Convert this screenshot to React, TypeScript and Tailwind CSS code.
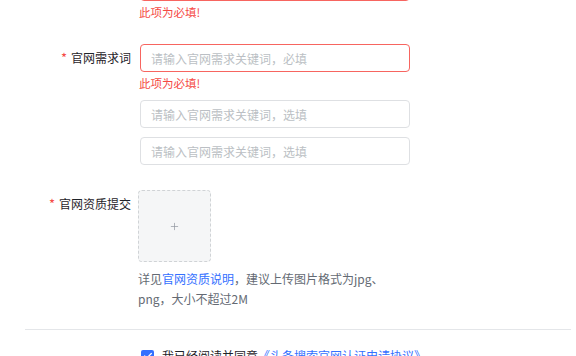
import { Check, Plus } from 'lucide-react';

const FONT = { fontFamily: '"Noto Sans CJK SC", "Noto Sans", sans-serif' };

function Label({ text, required }: { text: string; required?: boolean }) {
  return (
    <div className="w-[140px] shrink-0 pr-[9px] text-right text-[12px] leading-[28px] text-[#1f2329]">
      {required && <span className="mr-[4px] text-[13px] text-[#f54a45]">*</span>}
      {text}
    </div>
  );
}

function Input({ placeholder, error }: { placeholder: string; error?: boolean }) {
  return (
    <input
      placeholder={placeholder}
      className={
        'h-[28px] w-[270px] rounded-[4px] border bg-white px-[10px] text-[12px] text-[#1f2329] outline-none placeholder:text-[#bbbfc4] ' +
        (error ? 'border-[#f76560]' : 'border-[#dee0e3]')
      }
    />
  );
}

function ErrorText() {
  return <div className="ml-[-1px] pt-[3px] text-[11.5px] leading-[16px] text-[#f54a45]">此项为必填!</div>;
}

export default function App() {
  return (
    <div className="h-[356px] w-[576px] overflow-hidden bg-white" style={FONT}>
      {/* previous field, scrolled mostly out of view */}
      <div className="mt-[-27px] flex">
        <div className="w-[140px] shrink-0" />
        <div>
          <Input placeholder="" error />
          <ErrorText />
        </div>
      </div>

      <div className="mt-[24px] flex">
        <Label text="官网需求词" required />
        <div>
          <Input placeholder="请输入官网需求关键词，必填" error />
          <ErrorText />
          <div className="mt-[9px]">
            <Input placeholder="请输入官网需求关键词，选填" />
          </div>
          <div className="mt-[9px]">
            <Input placeholder="请输入官网需求关键词，选填" />
          </div>
        </div>
      </div>

      <div className="mt-[25px] flex">
        <Label text="官网资质提交" required />
        <div className="ml-[-2px] w-[270px]">
          <div className="flex h-[72px] w-[73px] items-center justify-center rounded-[4px] border border-dashed border-[#d0d3d6] bg-[#f5f6f7]">
            <Plus size={11} strokeWidth={1.5} className="text-[#8f959e]" />
          </div>
          <p className="mt-[7px] text-[12px] leading-[20px] text-[#646a73]">
            详见<a className="text-[#3370ff]">官网资质说明</a>，建议上传图片格式为jpg、png，大小不超过2M
          </p>
        </div>
      </div>

      <div className="ml-[25px] mr-[5px] mt-[20px] border-t border-[#e4e6e9]" />

      <div className="mt-[19px] flex items-center pl-[141px] text-[12px] leading-[14px]">
        <span className="flex h-[13px] w-[13px] items-center justify-center rounded-[2px] bg-[#3370ff]">
          <Check size={10} strokeWidth={3} className="text-white" />
        </span>
        <span className="ml-[8px] text-[#1f2329]">我已经阅读并同意</span>
        <a className="text-[#3370ff]">《头条搜索官网认证申请协议》</a>
      </div>
    </div>
  );
}
